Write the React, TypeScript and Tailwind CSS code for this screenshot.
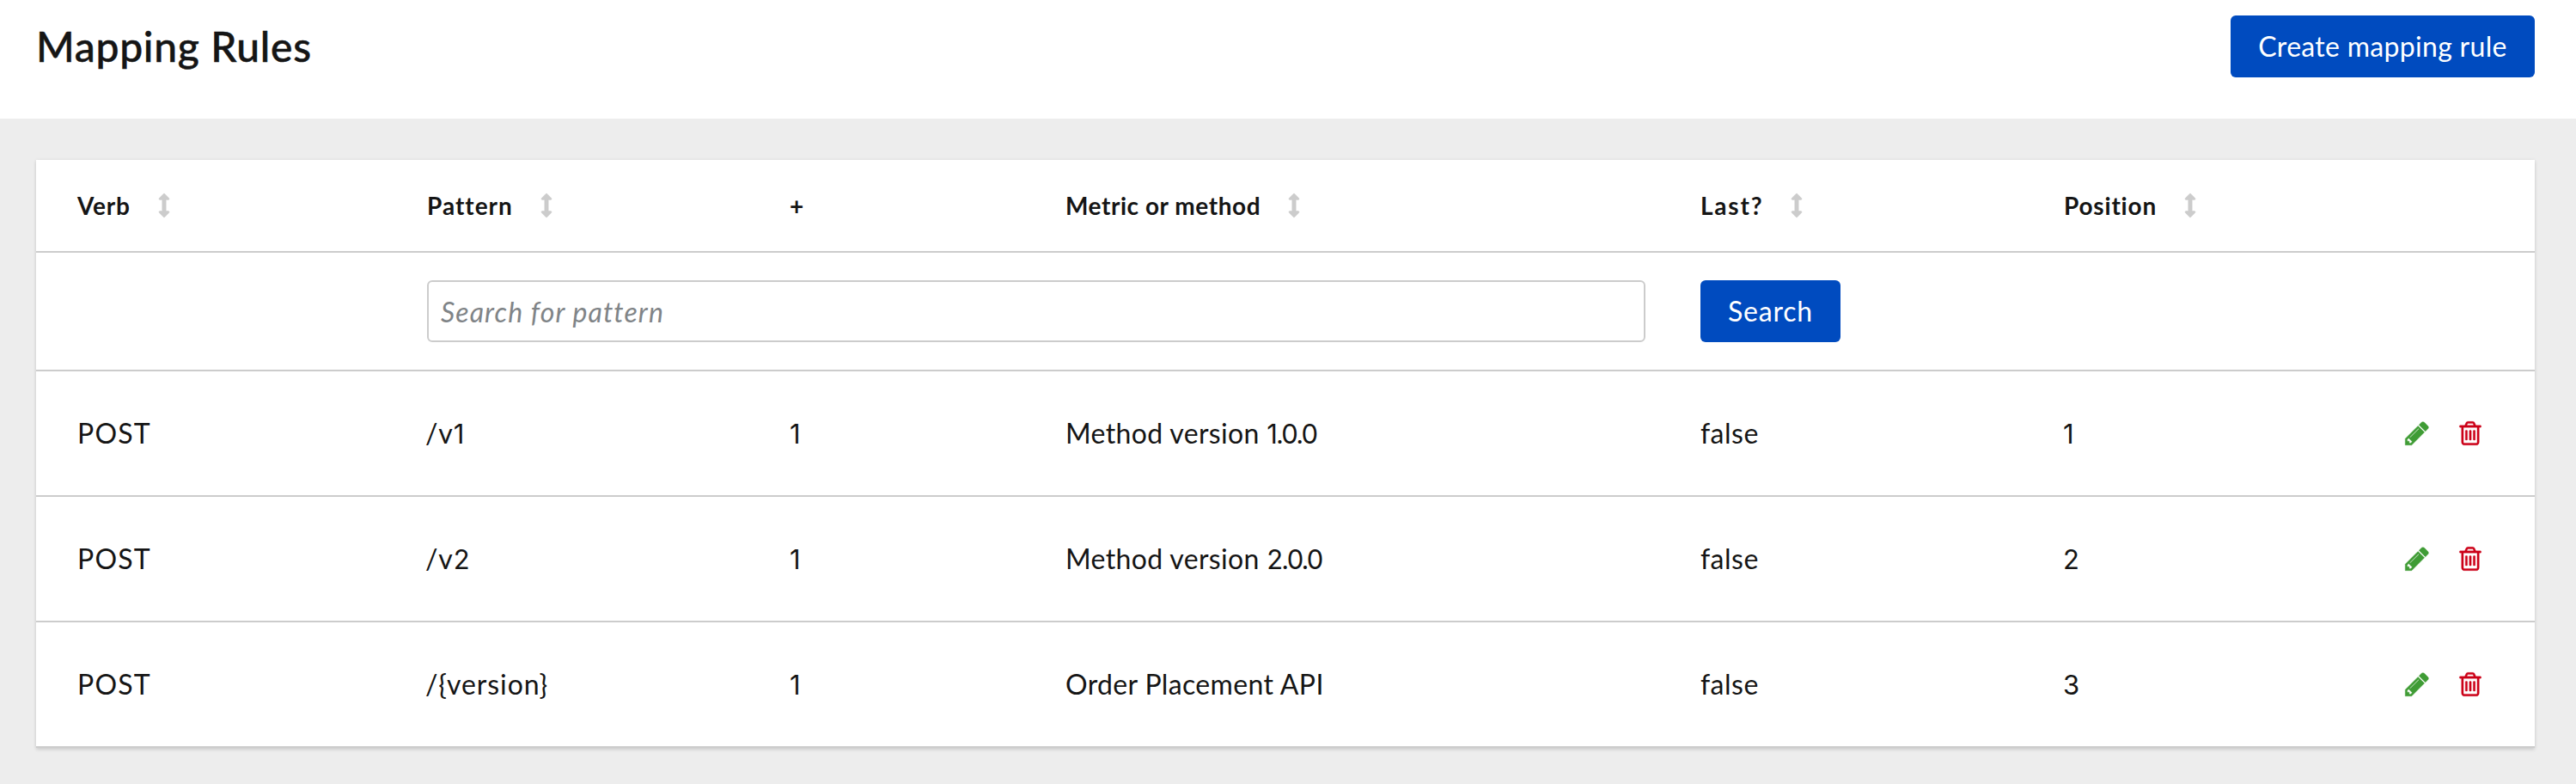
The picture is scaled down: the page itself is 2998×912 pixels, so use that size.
import { Fragment } from "react";

const columns = [
  { label: "Verb", sortable: true, tracking: "tracking-[0.8px]" },
  { label: "Pattern", sortable: true, tracking: "tracking-[1px]" },
  { label: "+", sortable: false, tracking: "tracking-normal" },
  { label: "Metric or method", sortable: true, tracking: "tracking-[0.55px]" },
  { label: "Last?", sortable: true, tracking: "tracking-[1.8px]" },
  { label: "Position", sortable: true, tracking: "tracking-[0.8px]" },
];

const rules = [
  { verb: "POST", pattern: "/v1", increment: "1", metric: "Method version 1.0.0", last: "false", position: "1" },
  { verb: "POST", pattern: "/v2", increment: "1", metric: "Method version 2.0.0", last: "false", position: "2" },
  { verb: "POST", pattern: "/{version}", increment: "1", metric: "Order Placement API", last: "false", position: "3" },
];

const rowGrid =
  "grid grid-cols-[407px_422px_321px_739px_423px_1fr] items-center border-b-2 border-[#cccccc] pl-12";

/* Digits are set in Inter, whose "1" has no foot. */
function Mixed({ text }: { text: string }) {
  return (
    <>
      {text.split(/([\d.]+)/).map((part, i) =>
        /^[\d.]+$/.test(part) ? (
          <span key={i} className="font-['Inter',sans-serif] text-[31px] font-normal tracking-[-0.06em]">
            {part}
          </span>
        ) : (
          <Fragment key={i}>{part}</Fragment>
        )
      )}
    </>
  );
}

function SortIcon() {
  return (
    <svg viewBox="0 0 12 28" className="h-7 w-3 overflow-visible fill-[#cccccc] stroke-[#cccccc] stroke-[0.5]">
      <path d="M5.3.4q.7-.6 1.4 0l5 5.2q.5.6.2 1.2t-.9.6H8.2v13.2H11q.6 0 .9.6t-.2 1.2l-5 5.2q-.7.6-1.4 0l-5-5.2q-.5-.6-.2-1.2t.9-.6h2.8V7.4H1q-.6 0-.9-.6t.2-1.2z" />
    </svg>
  );
}

function PencilIcon() {
  return (
    <svg viewBox="0 0 1792 1792" className="size-8 fill-[#3f9c35] stroke-[#3f9c35] stroke-[24]">
      <path d="M491 1536l91-91-235-235-91 91v107h128v128h107zm523-928q0-22-22-22-10 0-17 7l-542 542q-7 7-7 17 0 22 22 22 10 0 17-7l542-542q7-7 7-17zm-54-192l416 416-832 832h-416v-416zm683 96q0 53-37 90l-166 166-416-416 166-165q36-38 90-38 53 0 91 38l235 234q37 39 37 91z" />
    </svg>
  );
}

function TrashIcon() {
  return (
    <svg viewBox="0 0 1792 1792" className="size-8 fill-[#cc0018] stroke-[#cc0018] stroke-[20]">
      <path d="M704 736v576q0 14-9 23t-23 9h-64q-14 0-23-9t-9-23v-576q0-14 9-23t23-9h64q14 0 23 9t9 23zm256 0v576q0 14-9 23t-23 9h-64q-14 0-23-9t-9-23v-576q0-14 9-23t23-9h64q14 0 23 9t9 23zm256 0v576q0 14-9 23t-23 9h-64q-14 0-23-9t-9-23v-576q0-14 9-23t23-9h64q14 0 23 9t9 23zm128 724v-948h-896v948q0 22 7 40.5t14.5 27 10.5 8.5h832q3 0 10.5-8.5t14.5-27 7-40.5zm-672-1076h448l-48-117q-7-9-17-11h-317q-10 2-17 11zm928 32v64q0 14-9 23t-23 9h-96v948q0 83-47 143.5t-113 60.5h-832q-66 0-113-58.5t-47-141.5v-952h-96q-14 0-23-9t-9-23v-64q0-14 9-23t23-9h309l70-167q15-37 54-63t79-26h320q40 0 79 26t54 63l70 167h309q14 0 23 9t9 23z" />
    </svg>
  );
}

export default function App() {
  return (
    <div className="flex h-[912px] flex-col bg-[#ededed] font-['Lato',sans-serif] text-[32px] text-[#151515]">
      <header className="flex h-[138px] shrink-0 items-start justify-between bg-white pt-[18px] pr-12 pl-[42px]">
        <h1 className="text-5xl leading-[72px] font-medium tracking-[0.7px] [-webkit-text-stroke:0.5px_#151515]">
          Mapping Rules
        </h1>
        <button className="h-[72px] w-[354px] rounded-md bg-[#004bbf] tracking-[0.3px] text-white">
          Create mapping rule
        </button>
      </header>

      <main className="pt-12 pr-12 pl-[42px]">
        <div className="bg-white shadow-[0_2px_4px_rgba(3,3,3,0.12),0_0_4px_rgba(3,3,3,0.06)]">
          <div className={`${rowGrid} h-[108px] text-[28px] font-bold`}>
            {columns.map((c) => (
              <div key={c.label} className="flex items-center gap-[33px]">
                <span className={c.tracking}>{c.label}</span>
                {c.sortable && <SortIcon />}
              </div>
            ))}
          </div>

          <div className={`${rowGrid} h-[138px]`}>
            <input
              className="col-span-3 col-start-2 mr-16 h-[72px] rounded-md border-2 border-[#cccccc] px-3.5 tracking-[1.1px] italic placeholder:text-[#808487]"
              placeholder="Search for pattern"
            />
            <button className="h-[72px] w-[163px] rounded-md bg-[#004bbf] tracking-[0.8px] text-white">Search</button>
          </div>

          {rules.map((r) => (
            <div key={r.position} className={`${rowGrid} h-[146px]`}>
              <span className="tracking-[1.2px]">{r.verb}</span>
              <span className="-ml-0.5 tracking-[0.9px]"><Mixed text={r.pattern} /></span>
              <span><Mixed text={r.increment} /></span>
              <span className="tracking-[0.35px]"><Mixed text={r.metric} /></span>
              <span className="tracking-[0.5px]">{r.last}</span>
              <div className="flex items-center justify-between pr-[59px]">
                <span className="-ml-px"><Mixed text={r.position} /></span>
                <div className="flex gap-[30px]">
                  <PencilIcon />
                  <TrashIcon />
                </div>
              </div>
            </div>
          ))}
        </div>
      </main>
    </div>
  );
}
